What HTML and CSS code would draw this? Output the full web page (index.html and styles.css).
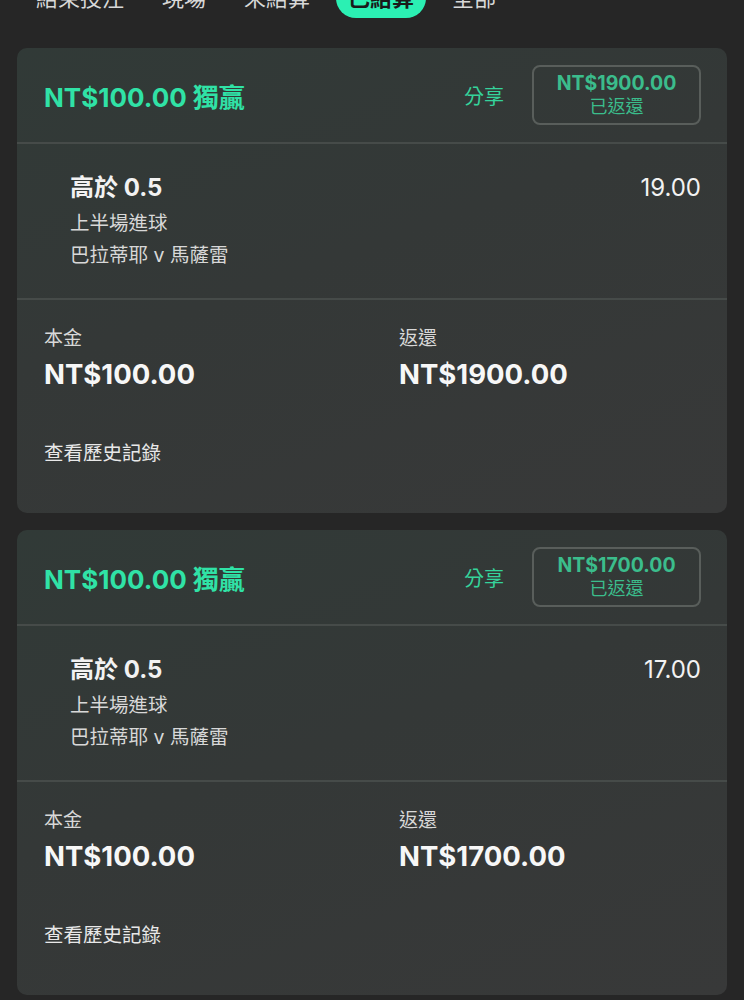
FILE: index.html
```html
<!DOCTYPE html>
<html lang="zh-Hant">
<head>
<meta charset="utf-8">
<link rel="stylesheet" href="styles.css">
</head>
<body>
<nav class="tabs">
  <span class="tab">結束投注</span>
  <span class="tab">現場</span>
  <span class="tab">未結算</span>
  <span class="tab active">已結算</span>
  <span class="tab">全部</span>
</nav>

<section class="card">
  <div class="card-head">
    <div class="title">NT$100.00 獨贏</div>
    <div class="share">分享</div>
    <div class="returned">
      <span class="ret-amt">NT$1900.00</span>
      <span class="ret-lbl">已返還</span>
    </div>
  </div>
  <div class="selection">
    <div class="sel-info">
      <div class="sel-name">高於 0.5</div>
      <div class="sel-sub">上半場進球</div>
      <div class="sel-sub">巴拉蒂耶 v 馬薩雷</div>
    </div>
    <div class="odds">19.00</div>
  </div>
  <div class="summary">
    <div class="amounts">
      <div class="amt">
        <div class="amt-lbl">本金</div>
        <div class="amt-val">NT$100.00</div>
      </div>
      <div class="amt">
        <div class="amt-lbl">返還</div>
        <div class="amt-val">NT$1900.00</div>
      </div>
    </div>
    <div class="history">查看歷史記錄</div>
  </div>
</section>

<section class="card">
  <div class="card-head">
    <div class="title">NT$100.00 獨贏</div>
    <div class="share">分享</div>
    <div class="returned">
      <span class="ret-amt">NT$1700.00</span>
      <span class="ret-lbl">已返還</span>
    </div>
  </div>
  <div class="selection">
    <div class="sel-info">
      <div class="sel-name">高於 0.5</div>
      <div class="sel-sub">上半場進球</div>
      <div class="sel-sub">巴拉蒂耶 v 馬薩雷</div>
    </div>
    <div class="odds">17.00</div>
  </div>
  <div class="summary">
    <div class="amounts">
      <div class="amt">
        <div class="amt-lbl">本金</div>
        <div class="amt-val">NT$100.00</div>
      </div>
      <div class="amt">
        <div class="amt-lbl">返還</div>
        <div class="amt-val">NT$1700.00</div>
      </div>
    </div>
    <div class="history">查看歷史記錄</div>
  </div>
</section>
</body>
</html>
```

FILE: styles.css
```css
html, body {
  margin: 0;
  padding: 0;
  background: #262626;
}
body {
  font-family: "Inter", "Noto Sans CJK TC", sans-serif;
  color: #f2f2f2;
  overflow: hidden;
}
.tabs {
  display: flex;
  align-items: center;
  gap: 14px;
  height: 40px;
  margin-top: -22px;
  margin-bottom: 30px;
  padding-left: 24px;
}
.tab {
  font-size: 22px;
  color: #d8d8d8;
  padding: 0 12px;
  line-height: 40px;
}
.tab.active {
  background: #2bf0b3;
  color: #1a1a1a;
  border-radius: 20px;
  font-weight: 700;
}
.card {
  margin: 0 17px 17px;
  border-radius: 10px;
  background: linear-gradient(160deg, #313a37 0%, #343837 45%, #383939 100%);
}
.card-head {
  display: flex;
  align-items: center;
  height: 94px;
  padding: 0 26px 0 27px;
  border-bottom: 2px solid #464b49;
}
.title {
  flex: 1;
  font-size: 26px;
  font-weight: 700;
  color: #30e2a6;
}
.share {
  font-size: 20px;
  color: #35d39b;
  margin-right: 28px;
}
.returned {
  width: 165px;
  height: 56px;
  border: 2px solid #595e5b;
  border-radius: 8px;
  display: flex;
  flex-direction: column;
  align-items: center;
  justify-content: center;
  color: #3bbd8c;
}
.ret-amt {
  font-size: 19.5px;
  font-weight: 700;
  line-height: 24px;
}
.ret-lbl {
  font-size: 18px;
  line-height: 24px;
}
.selection {
  display: flex;
  justify-content: space-between;
  padding: 29px 26px 27px 53px;
  border-bottom: 2px solid #464b49;
}
.sel-name {
  font-size: 24px;
  font-weight: 700;
  line-height: 30px;
  margin-bottom: 4px;
}
.sel-sub {
  font-size: 19.5px;
  line-height: 32px;
  color: #d8d8d8;
}
.odds {
  font-size: 24px;
  line-height: 30px;
  color: #f2f2f2;
}
.summary {
  padding: 27px 27px 48px;
}
.amounts {
  display: grid;
  grid-template-columns: 355px 1fr;
}
.amt-lbl {
  font-size: 19px;
  line-height: 24px;
  color: #d8d8d8;
  margin-bottom: 5px;
}
.amt-val {
  font-size: 27.5px;
  font-weight: 700;
  line-height: 36px;
  color: #f7f7f7;
}
.history {
  margin-top: 49px;
  font-size: 19.5px;
  line-height: 24px;
  color: #e8e8e8;
}
```
